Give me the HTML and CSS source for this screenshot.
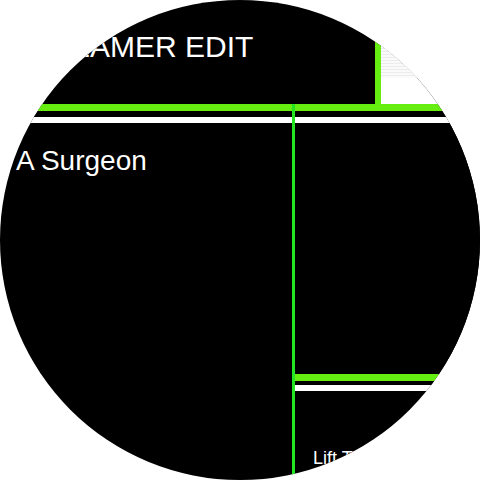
FILE: index.html
```html
<!DOCTYPE html>
<html>
<head>
<meta charset="utf-8">
<link rel="stylesheet" href="styles.css">
</head>
<body>
<div class="watch">
  <div class="header">
    <div class="title-box"><span class="title">STREAMER EDIT</span></div>
    <div class="accent"></div>
    <div class="preview"><div class="stripes"></div></div>
  </div>
  <div class="divider">
    <div class="bar-green"></div>
    <div class="gap"></div>
    <div class="bar-white"></div>
  </div>
  <div class="content">
    <div class="left-col"><span class="name">A Surgeon</span></div>
    <div class="vline"></div>
    <div class="right-col">
      <div class="panel"></div>
      <div class="divider small">
        <div class="bar-green"></div>
        <div class="gap"></div>
        <div class="bar-white"></div>
      </div>
      <div class="caption">Lift Tickets</div>
    </div>
  </div>
</div>
</body>
</html>
```

FILE: styles.css
```css
html, body {
  margin: 0;
  padding: 0;
  background: #fff;
}
.watch {
  width: 480px;
  height: 480px;
  border-radius: 50%;
  overflow: hidden;
  background: #000;
  display: flex;
  flex-direction: column;
  font-family: "Liberation Sans", Arial, sans-serif;
  color: #fff;
}
.header {
  height: 104px;
  display: flex;
  flex: 0 0 auto;
}
.title-box {
  width: 375px;
  flex: 0 0 375px;
  padding: 30px 0 0 10px;
  box-sizing: border-box;
}
.title {
  font-size: 30px;
  line-height: 34px;
  white-space: nowrap;
}
.accent {
  flex: 0 0 6px;
  background: #66ee11;
}
.preview {
  flex: 1;
  background: #fff;
}
.stripes {
  height: 78px;
  background: repeating-linear-gradient(to bottom, #ececec 0 1px, #fafafa 1px 3px);
}
.divider {
  display: flex;
  flex-direction: column;
  flex: 0 0 auto;
}
.bar-green {
  height: 7px;
  background: #66ee11;
}
.gap {
  height: 6px;
  background: #000;
}
.bar-white {
  height: 6px;
  background: #fff;
}
.divider.small .bar-green { height: 7px; }
.divider.small .gap { height: 4px; }
.content {
  flex: 1;
  display: flex;
  margin-top: -19px;
}
.left-col {
  flex: 0 0 292px;
  padding: 41px 0 0 16px;
  box-sizing: border-box;
}
.name {
  font-size: 28px;
  line-height: 32px;
}
.vline {
  flex: 0 0 3px;
  background: #22e622;
}
.right-col {
  flex: 1;
  display: flex;
  flex-direction: column;
}
.panel {
  height: 251px;
  flex: 0 0 251px;
  background: #000;
}
.content .left-col { position: relative; }
.right-col { margin-top: 19px; }
.caption {
  font-size: 18px;
  line-height: 21px;
  padding: 57px 0 0 18px;
  white-space: nowrap;
}
```
